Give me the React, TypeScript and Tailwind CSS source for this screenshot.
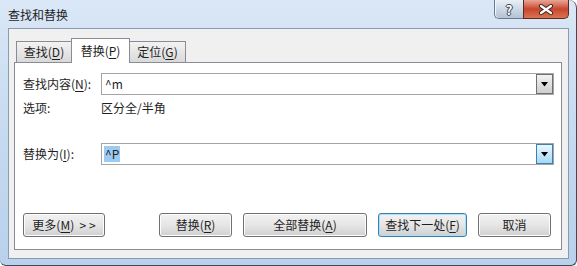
import React from 'react'

const font = { fontFamily: '"Noto Sans CJK SC", "Noto Sans", sans-serif' }

function Key({ k }: { k: string }) {
  return <span className="underline underline-offset-2">{k}</span>
}

function DropArrow({ active }: { active?: boolean }) {
  return (
    <div
      className={
        active
          ? 'flex h-[20px] w-[17px] items-center justify-center border border-[#3c7fb1] bg-gradient-to-b from-[#eaf6fd] to-[#a7d9f5]'
          : 'flex h-[20px] w-[17px] items-center justify-center border border-[#707070] bg-gradient-to-b from-[#f2f2f2] to-[#cfcfcf]'
      }
    >
      <svg width="7" height="5" viewBox="0 0 7 5">
        <path d="M0 0H7L3.5 4.5Z" fill="#000" />
      </svg>
    </div>
  )
}

function WinButton({ children, w, isDefault }: { children: React.ReactNode; w: string; isDefault?: boolean }) {
  return (
    <div
      className={`${w} flex h-[24px] items-center justify-center rounded-[3px] border ${
        isDefault
          ? 'border-[#3c7fb1] shadow-[inset_0_0_0_1px_#a6e0f8]'
          : 'border-[#707070] shadow-[inset_0_0_0_1px_#fcfcfc]'
      } bg-gradient-to-b from-[#f2f2f2] via-[#e6e6e6] to-[#d0d0d0] text-[12px] leading-[16px] text-[#1e1e1e]`}
    >
      {children}
    </div>
  )
}

function Combo({ value, selected, active }: { value: string; selected?: boolean; active?: boolean }) {
  return (
    <div className="flex h-[22px] flex-1 items-center border border-[#a5a5a5] bg-white pl-[2px]">
      <div className="flex flex-1 items-center text-[12px] leading-[16px] text-[#1e1e1e]">
        <span className={selected ? 'inline-block bg-[#9ccaf2] px-[1px] leading-[16px]' : 'px-[1px]'}>{value}</span>
      </div>
      <DropArrow active={active} />
    </div>
  )
}

export default function App() {
  return (
    <div
      style={font}
      className="flex h-[266px] w-[577px] flex-col overflow-hidden rounded-tr-[8px] rounded-b-[6px] border-r border-b border-[#3f4957] bg-gradient-to-b from-[#dae7f6] via-[#c6daf0] to-[#b9d1ec] pl-[8px] pr-[7px] pb-[6px]"
    >
      {/* title bar */}
      <div className="flex h-[28px] items-start justify-between">
        <div className="pt-[6px] text-[12px] leading-[18px] text-[#1e1e1e]">查找和替换</div>
        <div className="flex h-[19px]">
          <div className="flex w-[29px] items-center justify-center rounded-bl-[5px] border-b border-l border-[#6b7b8f] bg-gradient-to-b from-[#e9eff6] via-[#cdd8e5] to-[#b3c2d3] shadow-[inset_1px_0_0_#f4f7fa]">
            <span className="text-[13px] font-bold leading-[13px] text-white [text-shadow:0_0_1px_#3b4656,1px_0_0_#3b4656,-1px_0_0_#3b4656,0_1px_0_#3b4656,0_-1px_0_#3b4656]">
              ?
            </span>
          </div>
          <div className="flex w-[46px] items-center justify-center rounded-br-[5px] border-b border-r border-l border-[#5a2b22] bg-gradient-to-b from-[#e8a595] via-[#c8452f] to-[#d8744f]">
            <svg width="16" height="11" viewBox="0 0 16 11">
              <path d="M3 2L13 9M13 2L3 9" stroke="#3a2420" strokeWidth="4" strokeLinecap="round" />
              <path d="M3 2L13 9M13 2L3 9" stroke="#fff" strokeWidth="2.2" strokeLinecap="round" />
            </svg>
          </div>
        </div>
      </div>

      {/* client area */}
      <div className="flex flex-1 flex-col border border-[#8a9bb0] bg-[#f0f0f0] pl-[5px] pr-[6px] pt-[9px] pb-[8px]">
        {/* tabs */}
        <div className="flex h-[24px] items-end pl-[2px] text-[12px] leading-[16px] text-[#1e1e1e]">
          <div className="flex h-[21px] w-[56px] items-center justify-center border border-b-0 border-[#898c95] bg-gradient-to-b from-[#f3f3f3] to-[#d9d9d9]">
            查找(<Key k="D" />)
          </div>
          <div className="relative z-10 -mb-px -ml-px flex h-[25px] w-[59px] items-start justify-center border border-b-0 border-[#898c95] bg-white pt-[4px]">
            替换(<Key k="P" />)
          </div>
          <div className="-ml-px flex h-[21px] w-[57px] items-center justify-center border border-b-0 border-[#898c95] bg-gradient-to-b from-[#f3f3f3] to-[#d9d9d9]">
            定位(<Key k="G" />)
          </div>
        </div>

        {/* panel */}
        <div className="flex flex-1 flex-col border border-[#898c95] bg-white pl-[8px] pr-[7px] pt-[10px] text-[12px] leading-[16px] text-[#1e1e1e]">
          <div className="flex items-center">
            <div className="w-[78px]">
              查找内容(<Key k="N" />):
            </div>
            <Combo value="^m" />
          </div>
          <div className="mt-[5px] flex">
            <div className="w-[78px]">选项:</div>
            <div>区分全/半角</div>
          </div>
          <div className="mt-[27px] flex items-center">
            <div className="w-[78px]">
              替换为(<Key k="I" />):
            </div>
            <Combo value="^P" selected active />
          </div>
          <div className="mt-[48px] flex items-center pr-[3px]">
            <WinButton w="w-[82px]">
              更多(<Key k="M" />)&nbsp;&nbsp;&gt; &gt;
            </WinButton>
            <div className="flex-1" />
            <div className="flex gap-[11px]">
              <WinButton w="w-[73px]">
                替换(<Key k="R" />)
              </WinButton>
              <WinButton w="w-[124px]">
                全部替换(<Key k="A" />)
              </WinButton>
              <WinButton w="w-[89px]" isDefault>
                查找下一处(<Key k="F" />)
              </WinButton>
              <WinButton w="w-[73px]">取消</WinButton>
            </div>
          </div>
        </div>
      </div>
    </div>
  )
}
